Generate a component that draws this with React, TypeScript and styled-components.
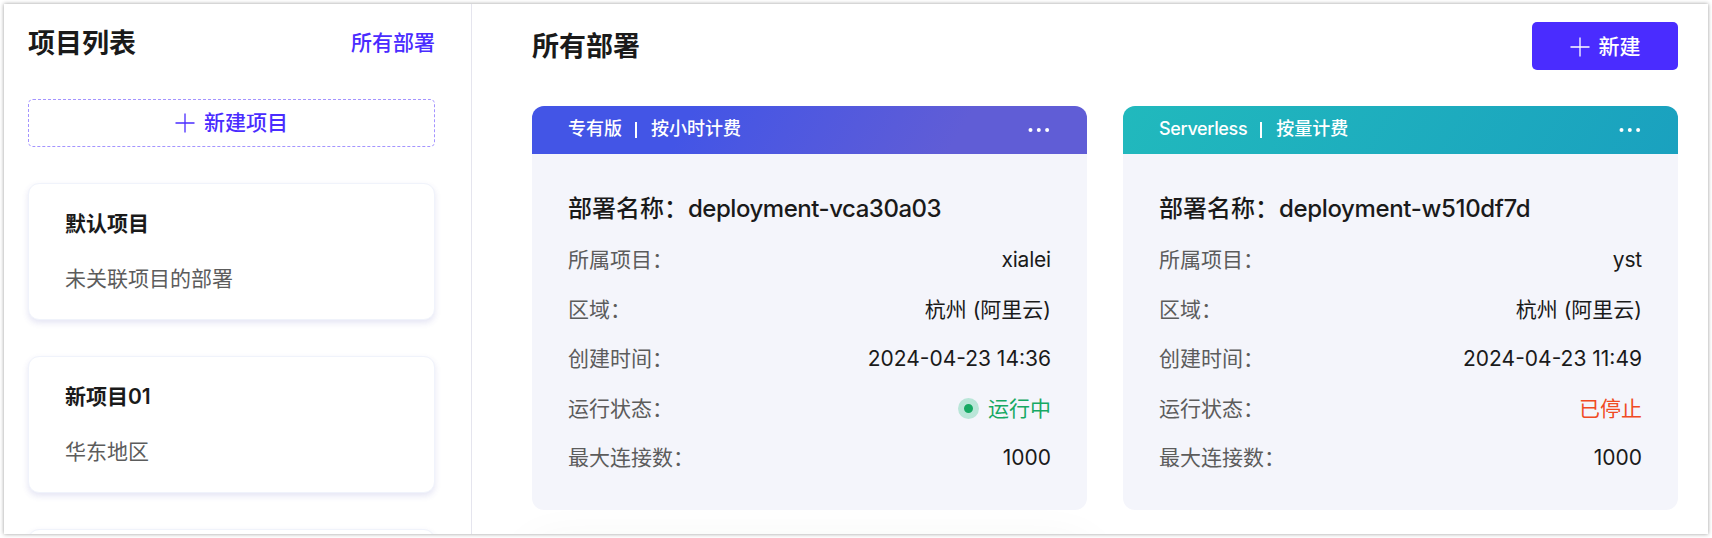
import React from 'react';
import styled, { createGlobalStyle } from 'styled-components';

const GlobalStyle = createGlobalStyle`
  *, *::before, *::after { box-sizing: border-box; }
  body {
    margin: 0;
    background: #fff;
    color: #1a1a1a;
    font-family: Inter, "Noto Sans CJK SC", sans-serif;
    font-size: 21px;
    line-height: 30px;
    overflow: hidden;
  }
  h1, h2, h3, p, dl, dt, dd { margin: 0; }
  button { font: inherit; cursor: pointer; }
`;

const Page = styled.div`
  height: 538px;
  padding: 4px;
`;

const Frame = styled.div`
  display: flex;
  height: 530px;
  background: #fff;
  box-shadow: 0 0 4px rgba(0, 0, 0, 0.4);
  overflow: hidden;
`;

const Sidebar = styled.aside`
  flex: none;
  width: 468px;
  padding: 24px 36px 0 24px;
  border-right: 1px solid #e5e5ee;
`;

const SidebarHeader = styled.header`
  display: flex;
  align-items: center;
  justify-content: space-between;
  height: 30px;
  margin-bottom: 41px;
`;

const Heading = styled.h1`
  padding-top: 2px;
  font-size: 27px;
  line-height: 36px;
  font-weight: 700;
`;

const AllLink = styled.a`
  color: #4a2cff;
  font-weight: 500;
`;

const Button = styled.button`
  display: flex;
  align-items: center;
  justify-content: center;
  gap: 9px;
  height: 48px;
  border-radius: 5px;
`;

const DashedButton = styled(Button)`
  width: 100%;
  margin-bottom: 36px;
  padding-bottom: 2px;
  border: 1px dashed #a494ff;
  background: #fff;
  color: #4a2cff;
  font-weight: 500;
`;

const PrimaryButton = styled(Button)`
  width: 146px;
  padding-top: 2px;
  border: 0;
  background: #4a2cff;
  color: #fff;
  font-weight: 500;
`;

const ProjectCard = styled.section`
  height: 137px;
  margin-bottom: 36px;
  padding: 25px 36px;
  border: 1px solid #f0f3fb;
  border-radius: 11px;
  background: #fff;
  box-shadow: 0 3px 6px rgba(70, 70, 180, 0.14);
`;

const ProjectName = styled.h3`
  margin-bottom: 25px;
  font-size: 21px;
  line-height: 30px;
  font-weight: 600;
`;

const ProjectNote = styled.p`
  color: #5c5c5c;
`;

const Main = styled.main`
  flex: 1;
  padding: 18px 30px 0 60px;
`;

const MainHeader = styled.header`
  display: flex;
  align-items: center;
  justify-content: space-between;
  margin-bottom: 36px;
`;

const CardGrid = styled.div`
  display: grid;
  grid-template-columns: 1fr 1fr;
  gap: 36px;
`;

const DeploymentCard = styled.article`
  height: 404px;
  border-radius: 12px;
  background: #f4f5fb;
  overflow: hidden;
`;

const UpcomingCard = styled(DeploymentCard)`
  box-shadow: 0 0 50px rgba(0, 60, 40, 0.06);
`;

const CardBar = styled.header<{ $fill: string }>`
  display: flex;
  align-items: center;
  justify-content: space-between;
  height: 48px;
  padding: 0 36px;
  background: ${({ $fill }) => $fill};
  color: #fff;
  font-size: 18px;
`;

const Plan = styled.div`
  display: flex;
  align-items: center;
  gap: 12px;
  line-height: 24px;
  padding-bottom: 2px;
  font-weight: 500;
`;

const Edition = styled.span<{ $tracking: string }>`
  letter-spacing: ${({ $tracking }) => $tracking};
`;

const Divider = styled.span`
  width: 2px;
  height: 16px;
  margin: 2px 2px 0 1px;
  background: #fff;
`;

const CardBody = styled.div`
  padding: 37px 36px 0;
`;

const CardTitle = styled.h2`
  font-size: 24px;
  line-height: 36px;
  font-weight: 500;
  margin-bottom: 8.5px;
  white-space: nowrap;
`;

const DeploymentId = styled.span<{ $tracking: string }>`
  font-weight: 500;
  letter-spacing: ${({ $tracking }) => $tracking};
`;

const Row = styled.dl`
  display: flex;
  align-items: center;
  justify-content: space-between;
  height: 49.5px;
`;

const Label = styled.dt`
  color: #5c5c5c;
`;

const Value = styled.dd<{ $color?: string; $tracking?: string }>`
  display: flex;
  align-items: center;
  gap: 9px;
  color: ${({ $color }) => $color ?? '#1a1a1a'};
  letter-spacing: ${({ $tracking }) => $tracking ?? 'normal'};
`;

const StatusDot = styled.span`
  width: 21px;
  height: 21px;
  border: 6px solid #b9e6d8;
  border-radius: 50%;
  background: #16a963;
`;

const PlusIcon = () => (
  <svg width="20" height="20" viewBox="0 0 20 20" fill="none" stroke="currentColor" strokeWidth="1.3">
    <path d="M10 0.5V19.5M0.5 10H19.5" />
  </svg>
);

const MoreIcon = () => (
  <svg width="24" height="6" viewBox="0 0 24 6" fill="currentColor">
    <circle cx="3.5" cy="3" r="2" />
    <circle cx="11.8" cy="3" r="2" />
    <circle cx="20.1" cy="3" r="2" />
  </svg>
);

const projects = [
  { name: '默认项目', note: '未关联项目的部署' },
  { name: '新项目01', note: '华东地区' },
  { name: '', note: '' },
];

const deployments = [
  {
    edition: '专有版',
    editionTracking: '0',
    billing: '按小时计费',
    fill: 'linear-gradient(120deg, #4355e6 28%, #605dd6 76%)',
    id: 'deployment-vca30a03',
    tracking: '-0.47px',
    project: 'xialei',
    created: '2024-04-23 14:36',
    running: true,
  },
  {
    edition: 'Serverless',
    editionTracking: '-0.35px',
    billing: '按量计费',
    fill: 'linear-gradient(120deg, #21b9bd 0%, #1aa1bf 100%)',
    id: 'deployment-w510df7d',
    tracking: '-0.35px',
    project: 'yst',
    created: '2024-04-23 11:49',
    running: false,
  },
];

export default function App() {
  return (
    <Page>
      <GlobalStyle />
      <Frame>
        <Sidebar>
          <SidebarHeader>
            <Heading>项目列表</Heading>
            <AllLink>所有部署</AllLink>
          </SidebarHeader>
          <DashedButton>
            <PlusIcon />
            新建项目
          </DashedButton>
          {projects.map((p, i) => (
            <ProjectCard key={i}>
              <ProjectName>{p.name}</ProjectName>
              <ProjectNote>{p.note}</ProjectNote>
            </ProjectCard>
          ))}
        </Sidebar>
        <Main>
          <MainHeader>
            <Heading>所有部署</Heading>
            <PrimaryButton>
              <PlusIcon />
              新建
            </PrimaryButton>
          </MainHeader>
          <CardGrid>
            {deployments.map((d) => (
              <DeploymentCard key={d.id}>
                <CardBar $fill={d.fill}>
                  <Plan>
                    <Edition $tracking={d.editionTracking}>{d.edition}</Edition>
                    <Divider />
                    <span>{d.billing}</span>
                  </Plan>
                  <MoreIcon />
                </CardBar>
                <CardBody>
                  <CardTitle>
                    部署名称：<DeploymentId $tracking={d.tracking}>{d.id}</DeploymentId>
                  </CardTitle>
                  <Row>
                    <Label>所属项目：</Label>
                    <Value $tracking="-0.2px">{d.project}</Value>
                  </Row>
                  <Row>
                    <Label>区域：</Label>
                    <Value>杭州 (阿里云)</Value>
                  </Row>
                  <Row>
                    <Label>创建时间：</Label>
                    <Value>{d.created}</Value>
                  </Row>
                  <Row>
                    <Label>运行状态：</Label>
                    {d.running ? (
                      <Value $color="#16a963">
                        <StatusDot />
                        运行中
                      </Value>
                    ) : (
                      <Value $color="#f04a23">已停止</Value>
                    )}
                  </Row>
                  <Row>
                    <Label>最大连接数：</Label>
                    <Value>1000</Value>
                  </Row>
                </CardBody>
              </DeploymentCard>
            ))}
            <UpcomingCard />
          </CardGrid>
        </Main>
      </Frame>
    </Page>
  );
}
